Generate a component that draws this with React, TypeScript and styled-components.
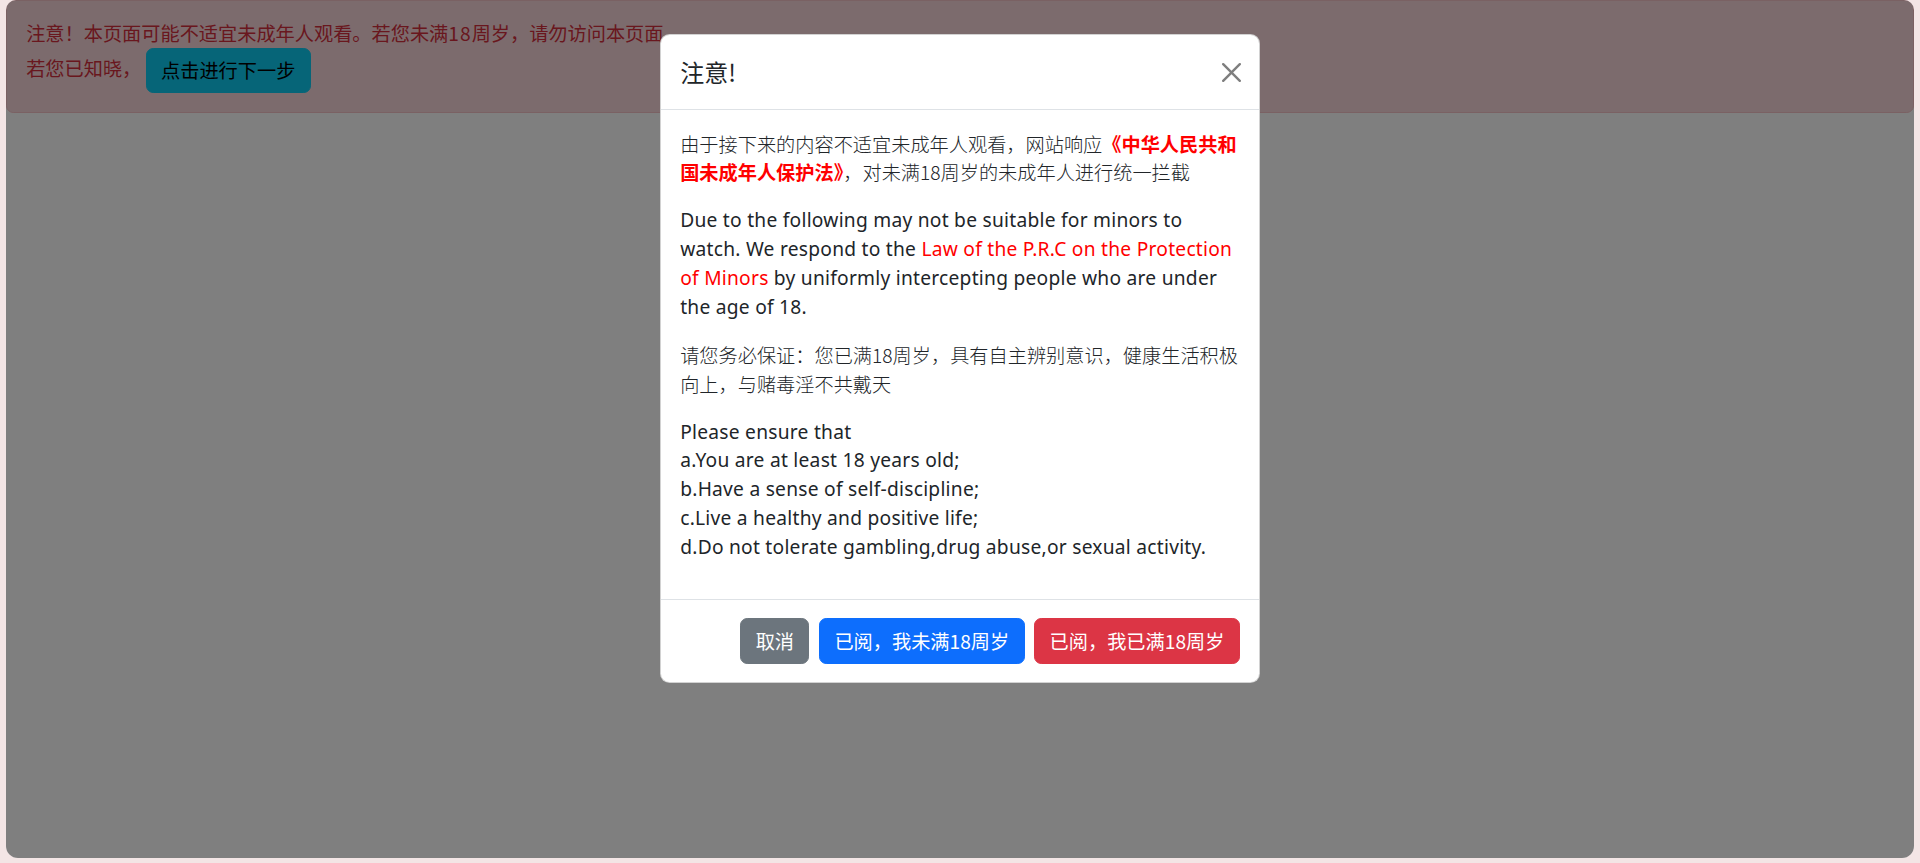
import React from "react";
import styled, { createGlobalStyle } from "styled-components";

const GlobalStyle = createGlobalStyle`
  html, body {
    margin: 0;
    padding: 0;
    background: #f3e5e5;
  }
  body {
    font-family: "Noto Sans", "Noto Sans CJK SC", sans-serif;
    font-size: 19.2px;
    line-height: 1.5;
    color: #212529;
  }
  * {
    box-sizing: border-box;
  }
`;

const App: React.FC = () => {
  return (
    <>
      <GlobalStyle />
      <Frame>
        <Alert>
          注意！本页面可能不适宜未成年人观看。若您未满<Num>18</Num>周岁，请勿访问本页面。
          <br />
          若您已知晓， <Button variant="info">点击进行下一步</Button>
        </Alert>

        <Backdrop />

        <ModalLayer>
          <ModalContent>
            <ModalHeader>
              <ModalTitle>注意!</ModalTitle>
              <CloseBtn type="button" aria-label="Close">
                <svg viewBox="0 0 16 16" width="19" height="19">
                  <path
                    fill="#000"
                    d="M.293.293a1 1 0 0 1 1.414 0L8 6.586 14.293.293a1 1 0 1 1 1.414 1.414L9.414 8l6.293 6.293a1 1 0 0 1-1.414 1.414L8 9.414l-6.293 6.293a1 1 0 0 1-1.414-1.414L6.586 8 .293 1.707a1 1 0 0 1 0-1.414z"
                  />
                </svg>
              </CloseBtn>
            </ModalHeader>

            <ModalBody>
              <CnText>
                由于接下来的内容不适宜未成年人观看，网站响应
                <LawCn>《中华人民共和国未成年人保护法》</LawCn>
                ，对未满18周岁的未成年人进行统一拦截
              </CnText>
              <EnText>
                Due to the following may not be suitable for minors to watch. We
                respond to the <LawEn>Law of the P.R.C on the Protection of Minors</LawEn>{" "}
                by uniformly intercepting people who are under the age of 18.
              </EnText>
              <CnText>
                请您务必保证：您已满18周岁，具有自主辨别意识，健康生活积极向上，与赌毒淫不共戴天
              </CnText>
              <EnText>
                Please ensure that
                <br />
                a.You are at least 18 years old;
                <br />
                b.Have a sense of self-discipline;
                <br />
                c.Live a healthy and positive life;
                <br />
                d.Do not tolerate gambling,drug abuse,or sexual activity.
              </EnText>
            </ModalBody>

            <ModalFooter>
              <Button variant="secondary">取消</Button>
              <Button variant="primary">已阅，我未满18周岁</Button>
              <Button variant="danger">已阅，我已满18周岁</Button>
            </ModalFooter>
          </ModalContent>
        </ModalLayer>
      </Frame>
    </>
  );
};

export default App;

const variants = {
  info: { bg: "#0dcaf0", color: "#000" },
  secondary: { bg: "#6c757d", color: "#fff" },
  primary: { bg: "#0d6efd", color: "#fff" },
  danger: { bg: "#dc3545", color: "#fff" },
};

type Variant = keyof typeof variants;

const Frame = styled.div`
  position: relative;
  margin: 0 6px;
  height: 858px;
  background: #fff;
  border-radius: 10px 10px 12px 12px;
  overflow: hidden;
`;

const Alert = styled.div`
  padding: 18px 19.2px 19.2px;
  border: 1.2px solid #f5c2c7;
  border-radius: 7.2px;
  background: #f8d7da;
  color: #d32f3d;
  font-family: "Noto Sans CJK SC", sans-serif;
  line-height: 28.8px;
`;

const Num = styled.span`
  letter-spacing: 1px;
`;

const Button = styled.button<{ variant: Variant }>`
  display: inline-block;
  padding: 7.2px 14.4px;
  font-family: "Noto Sans CJK SC", sans-serif;
  font-size: 19.2px;
  line-height: 28.8px;
  border: 1.2px solid ${(p) => variants[p.variant].bg};
  border-radius: 7.2px;
  background: ${(p) => variants[p.variant].bg};
  color: ${(p) => variants[p.variant].color};
  vertical-align: middle;
  cursor: pointer;
`;

const Backdrop = styled.div`
  position: absolute;
  inset: 0;
  background: rgba(0, 0, 0, 0.5);
`;

const ModalLayer = styled.div`
  position: absolute;
  inset: 0;
  display: flex;
  justify-content: center;
  align-items: flex-start;
  padding-top: 34px;
`;

const ModalContent = styled.div`
  width: 600px;
  display: flex;
  flex-direction: column;
  background: #fff;
  border: 1.2px solid rgba(0, 0, 0, 0.175);
  border-radius: 9.6px;
`;

const ModalHeader = styled.div`
  display: flex;
  align-items: center;
  justify-content: space-between;
  padding: 19.2px;
  border-bottom: 1.2px solid #dee2e6;
`;

const ModalTitle = styled.h5`
  margin: 0;
  font-family: "Noto Sans CJK SC", sans-serif;
  font-size: 24px;
  font-weight: 400;
  line-height: 36px;
  color: #212529;
`;

const CloseBtn = styled.button`
  display: flex;
  padding: 0;
  margin-right: -1px;
  border: 0;
  background: transparent;
  opacity: 0.5;
  cursor: pointer;
`;

const ModalBody = styled.div`
  padding: 19.2px 19.2px 18.4px;
`;

const CnText = styled.p`
  margin: 0 0 19.2px;
  font-family: "Noto Sans CJK SC", sans-serif;
  font-weight: 300;
  line-height: 28.8px;
`;

const EnText = styled.p`
  margin: 0 0 19.2px;
  line-height: 28.8px;
  letter-spacing: 0.25px;
`;

const LawCn = styled.strong`
  color: #ff0000;
  font-weight: 700;
`;

const LawEn = styled.span`
  color: #ff0000;
`;

const ModalFooter = styled.div`
  display: flex;
  justify-content: flex-end;
  align-items: center;
  gap: 9.6px;
  padding: 18.4px 19.2px;
  border-top: 1.2px solid #dee2e6;
`;
